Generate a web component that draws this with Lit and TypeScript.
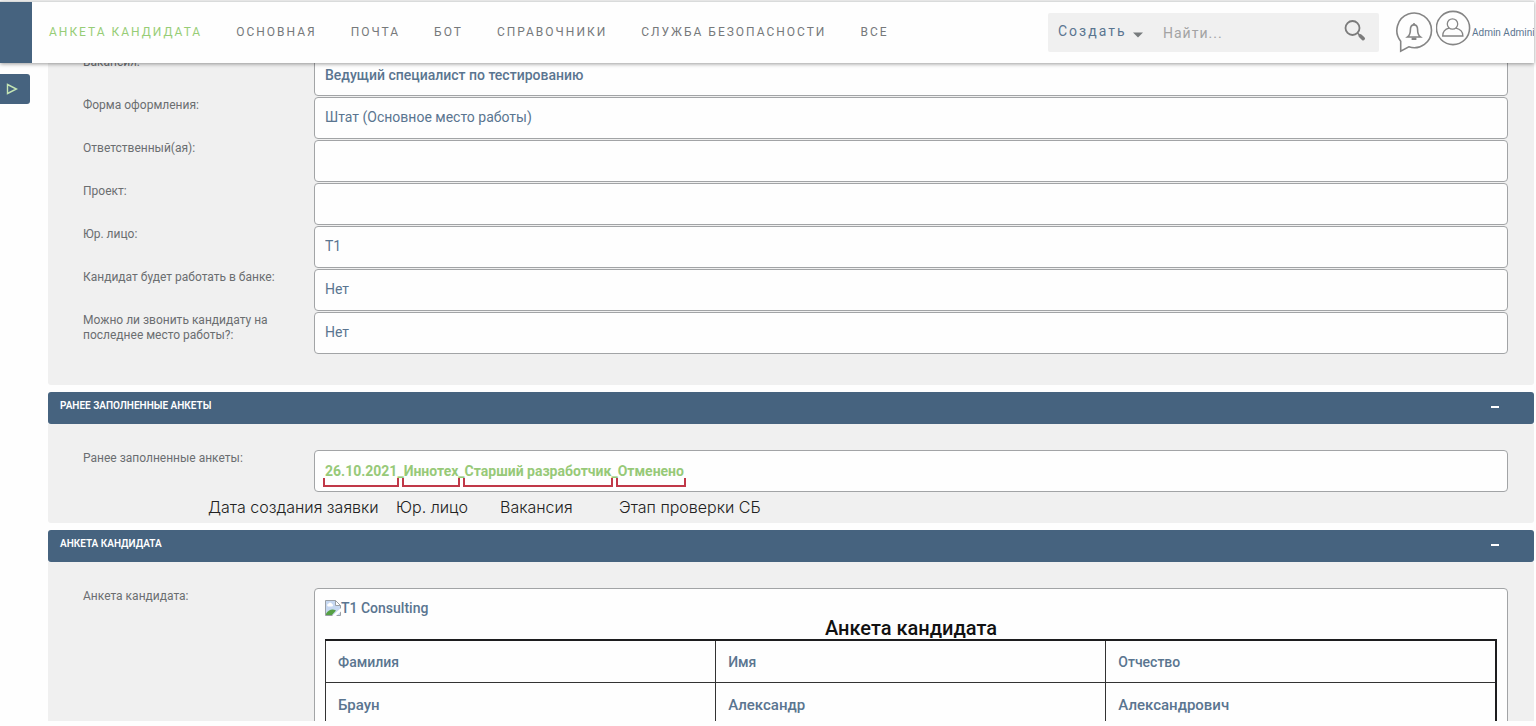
import { LitElement, html, css, nothing } from "lit";
import { customElement, property, state } from "lit/decorators.js";

interface Field {
  id: string;
  label: string;
  value: string;
  link?: boolean;
}

const NAV = ["Анкета кандидата", "Основная", "Почта", "Бот", "Справочники", "Служба безопасности", "Все"];

const FIELDS: Field[] = [
  { id: "vacancy", label: "Вакансия:", value: "Ведущий специалист по тестированию", link: true },
  { id: "form", label: "Форма оформления:", value: "Штат (Основное место работы)" },
  { id: "owner", label: "Ответственный(ая):", value: "" },
  { id: "project", label: "Проект:", value: "" },
  { id: "entity", label: "Юр. лицо:", value: "Т1" },
  { id: "bank", label: "Кандидат будет работать в банке:", value: "Нет" },
  { id: "call", label: "Можно ли звонить кандидату на последнее место работы?:", value: "Нет" },
];

const PARTS = ["26.10.2021", "Иннотех", "Старший разработчик", "Отменено"];
const CAPTIONS = ["Дата создания заявки", "Юр. лицо", "Вакансия", "Этап проверки СБ"];

@customElement("top-bar")
class TopBar extends LitElement {
  static styles = css`
    :host {
      display: flex;
      align-items: center;
      height: 61px;
      border-top: 1px solid #d9dbdb;
      background: #fefefe;
      box-shadow: 0 1px 4px rgba(0, 0, 0, 0.4);
      overflow-x: clip;
      white-space: nowrap;
    }
    .brand {
      flex: none;
      width: 32px;
      height: 61px;
      background: #46637f;
    }
    .nav {
      display: flex;
      gap: 34px;
      margin-left: 17px;
    }
    .nav a {
      color: #76797b;
      font-size: 12px;
      line-height: 17px;
      letter-spacing: 2px;
      text-transform: uppercase;
      text-decoration: none;
    }
    .nav a.active {
      color: #97cd76;
    }
    .tools {
      display: flex;
      align-items: center;
      flex: none;
      margin-left: auto;
      margin-right: 16px;
      height: 39px;
      background: #f0f0f0;
      border-radius: 2px;
    }
    button {
      border: 0;
      padding: 0;
      background: none;
      font: inherit;
      cursor: pointer;
    }
    .create {
      display: flex;
      align-items: center;
      gap: 6px;
      width: 102px;
      padding: 0 0 4px 10px;
      box-sizing: border-box;
      color: #5a7590;
      font-size: 14px;
      line-height: 18px;
      letter-spacing: 2px;
    }
    .create svg {
      margin-top: 8px;
    }
    .query {
      width: 194px;
      height: 39px;
      padding: 0 0 0 13px;
      box-sizing: border-box;
      border: 0;
      outline: 0;
      background: none;
      color: #5a7590;
      font: 14px/18px Roboto, sans-serif;
      letter-spacing: 1px;
    }
    .query::placeholder {
      color: #a3a3a3;
      opacity: 1;
    }
    .find {
      width: 35px;
      height: 39px;
      padding-bottom: 4px;
    }
    svg {
      display: block;
    }
    .icons {
      display: flex;
      flex: none;
      gap: 3px;
      align-items: flex-start;
      height: 45px;
    }
    .user {
      flex: none;
      width: 62px;
      color: #5a7590;
      font-size: 10px;
      line-height: 17px;
      text-decoration: none;
    }
  `;

  render() {
    return html`
      <div class="brand"></div>
      <nav class="nav">
        ${NAV.map((n, i) => html`<a href="#" class=${i === 0 ? "active" : ""}>${n}</a>`)}
      </nav>
      <div class="tools">
        <button class="create" type="button">
          Создать
          <svg width="10" height="6" viewBox="0 0 10 6"><path d="M0 .5h10L5 5.500z" fill="#777b7d" /></svg>
        </button>
        <input class="query" type="search" placeholder="Найти..." aria-label="Найти" />
        <button class="find" type="button" aria-label="Искать">
          <svg width="24" height="24" viewBox="0 0 24 24" fill="none" stroke="#7b7b7b">
            <circle cx="8.500" cy="9" r="7" stroke-width="1.800" />
            <path d="M13.500 14l2 2" stroke-width="1.600" />
            <path d="M16.200 16.800l3 2.800" stroke-width="3.600" stroke-linecap="round" />
          </svg>
        </button>
      </div>
      <div class="icons">
        <button type="button" aria-label="Уведомления">
          <svg width="38" height="44" viewBox="0 0 38 44" fill="none" stroke="#858585" stroke-width="1.600">
            <path d="M5.700 41.200V31.200A17.300 17.300 0 1 1 13.800 36.800z" />
            <path d="M12.600 27c2.200-1.600 2.800-3.200 2.800-7.200 0-3 1.300-4.900 3.600-4.900s3.600 1.900 3.600 4.900c0 4 .6 5.600 2.800 7.200z" />
            <path d="M19 13v2M17.400 28.300h3.200v.8h-3.200z" />
          </svg>
        </button>
        <button type="button" aria-label="Профиль">
          <svg width="36" height="38" viewBox="0 0 36 38" fill="none" stroke="#858585">
            <circle cx="17" cy="18" r="16.600" stroke-width="1.600" />
            <circle cx="16.500" cy="14" r="5.200" stroke-width="1.300" />
            <path d="M13.100 18.200c-4.400 1-6.400 3.600-6.400 7.800h20.200c0-4.200-2.400-6.800-7-7.800" stroke-width="1.300" />
          </svg>
        </button>
      </div>
      <a class="user" href="#">Admin Admini</a>
    `;
  }
}

@customElement("form-panel")
class FormPanel extends LitElement {
  @property() heading = "";
  @state() private open = true;

  static styles = css`
    :host {
      display: block;
    }
    .head {
      display: flex;
      align-items: center;
      justify-content: space-between;
      height: 32px;
      padding: 0 34px 0 12px;
      border-radius: 3px;
      background: #46637f;
    }
    h2 {
      margin: 0;
      padding-bottom: 4px;
      color: #fff;
      font-size: 10px;
      line-height: 16px;
      font-weight: 600;
      text-transform: uppercase;
    }
    .fold {
      width: 10px;
      height: 16px;
      padding: 0;
      border: 0;
      background: none;
      cursor: pointer;
    }
    .fold svg {
      display: block;
    }
    .body {
      background: #f0f0f0;
      border-radius: 0 0 3px 3px;
    }
  `;

  render() {
    return html`
      ${this.heading
        ? html`<div class="head">
            <h2>${this.heading}</h2>
            <button class="fold" type="button" aria-label="Свернуть" @click=${() => (this.open = !this.open)}>
              <svg width="10" height="16" viewBox="0 0 10 16"><path d="M1 6h8v2H1z" fill="#fff" /></svg>
            </button>
          </div>`
        : nothing}
      ${this.open ? html`<div class="body"><slot></slot></div>` : nothing}
    `;
  }
}

@customElement("app-root")
class AppRoot extends LitElement {
  static styles = css`
    :host {
      display: block;
      position: relative;
      box-sizing: border-box;
      height: 100vh;
      padding: 1px 2px 5px 0;
      overflow: hidden;
      background: #fefefe;
      font-family: Roboto, sans-serif;
    }
    .bar {
      position: relative;
      z-index: 2;
    }
    .viewport {
      position: absolute;
      inset: 0 2px 5px 0;
      overflow: hidden;
      padding: 54px 0 0 48px;
    }
    .toggle {
      position: absolute;
      left: 0;
      top: 74px;
      width: 30px;
      height: 30px;
      padding: 0 0 0 6px;
      border: 0;
      border-radius: 0 3px 3px 0;
      background: #46637f;
      cursor: pointer;
    }
    .toggle svg {
      display: block;
    }
    .stack {
      display: flex;
      flex-direction: column;
      gap: 7px;
    }
    .fields {
      display: flex;
      flex-direction: column;
      gap: 1px;
      padding: 0 26px 31px 35px;
    }
    .fields.padded {
      padding-top: 26px;
      padding-bottom: 0;
    }
    .row {
      display: grid;
      grid-template-columns: 231px 1fr;
      align-items: start;
    }
    .label {
      max-width: 200px;
      padding-top: 1px;
      color: #6b6e70;
      font-size: 12px;
      line-height: 15px;
    }
    .box {
      box-sizing: border-box;
      width: 100%;
      min-height: 42px;
      padding: 0 10px;
      border: 1px solid #a2a4a6;
      border-radius: 4px;
      background: #fefefe;
      color: #5a7590;
      font: 14px/40px Roboto, sans-serif;
      outline: 0;
    }
    input.box {
      padding-bottom: 2px;
      line-height: 38px;
    }
    .box a {
      color: inherit;
      font-weight: 500;
      text-decoration: none;
    }
    .box a.past {
      color: #97c978;
      font-weight: 700;
    }
    .part {
      position: relative;
    }
    .part::after {
      content: "";
      position: absolute;
      left: -2px;
      right: -2px;
      top: 15px;
      height: 7px;
      border: 2px solid #c03848;
      border-top: 0;
    }
    .captions {
      display: grid;
      grid-template-columns: 188px 104px 119px auto;
      height: 31px;
      margin-left: 160px;
      color: #222;
      font: 300 16px/31px Inter, "Noto Sans", sans-serif;
      white-space: nowrap;
    }
    .sheet {
      padding: 11px 10px 20px;
      line-height: 18px;
      font-weight: 500;
    }
    .logo {
      display: flex;
      height: 17px;
      line-height: 17px;
    }
    h3 {
      margin: 0;
      color: #111;
      font-size: 20px;
      line-height: 22px;
      font-weight: 500;
      text-align: center;
    }
    table {
      width: 100%;
      table-layout: fixed;
      border-collapse: collapse;
      border: 2px solid #1d1d1f;
      border-left-width: 1px;
    }
    th,
    td {
      height: 41px;
      padding: 0 12px;
      border: 1px solid #333;
      font-weight: 500;
      text-align: left;
    }
    td {
      height: 43px;
      font-size: 15px;
    }
  `;

  private row(f: Field) {
    return html`<div class="row">
      ${f.link
        ? html`<span class="label">${f.label}</span>
            <div class="box"><a href="#">${f.value}</a></div>`
        : html`<label class="label" for=${f.id}>${f.label}</label>
            <input class="box" id=${f.id} readonly .value=${f.value} />`}
    </div>`;
  }

  render() {
    return html`
      <top-bar class="bar"></top-bar>
      <main class="viewport">
        <button class="toggle" type="button" aria-label="Меню">
          <svg width="12" height="12" viewBox="0 0 12 12">
            <path d="M1.500 1.500v9l9-4.500z" fill="none" stroke="#c4e5b4" stroke-width="1.400" />
          </svg>
        </button>
        <div class="stack">
          <form-panel><div class="fields">${FIELDS.map((f) => this.row(f))}</div></form-panel>
          <form-panel heading="Ранее заполненные анкеты">
            <div class="fields padded">
              <div class="row">
                <span class="label">Ранее заполненные анкеты:</span>
                <div class="box">
                  <a class="past" href="#"
                    >${PARTS.map((p, i) => html`${i ? "_" : ""}<span class="part">${p}</span>`)}</a
                  >
                </div>
              </div>
            </div>
            <div class="captions">${CAPTIONS.map((c) => html`<span>${c}</span>`)}</div>
          </form-panel>
          <form-panel heading="Анкета кандидата">
            <div class="fields padded">
              <div class="row">
                <span class="label">Анкета кандидата:</span>
                <div class="box sheet">
                  <div class="logo">
                    <svg width="16" height="16" viewBox="0 0 16 16" aria-hidden="true">
                      <path d="M.5 .5h10l5 5v10H.5z" fill="#c6d8f2" stroke="#9aa0a6" />
                      <path d="M10.500 .5v5h5z" fill="#fff" stroke="#9aa0a6" />
                      <path d="M3 6.500a1.600 1.600 0 0 1 .6-3 2 2 0 0 1 3.600.6 1.300 1.300 0 0 1 0 2.400z" fill="#fff" />
                      <path d="M1 15v-1.500C4 9.500 7.500 8.500 11 10.500L7 15z" fill="#56a044" />
                      <path d="M7 16l9-8v3.500L11 16z" fill="#fefefe" />
                    </svg>
                    <span>T1 Consulting</span>
                  </div>
                  <h3>Анкета кандидата</h3>
                  <table>
                    <thead>
                      <tr><th>Фамилия</th><th>Имя</th><th>Отчество</th></tr>
                    </thead>
                    <tbody>
                      <tr><td>Браун</td><td>Александр</td><td>Александрович</td></tr>
                    </tbody>
                  </table>
                </div>
              </div>
            </div>
          </form-panel>
        </div>
      </main>
    `;
  }
}
